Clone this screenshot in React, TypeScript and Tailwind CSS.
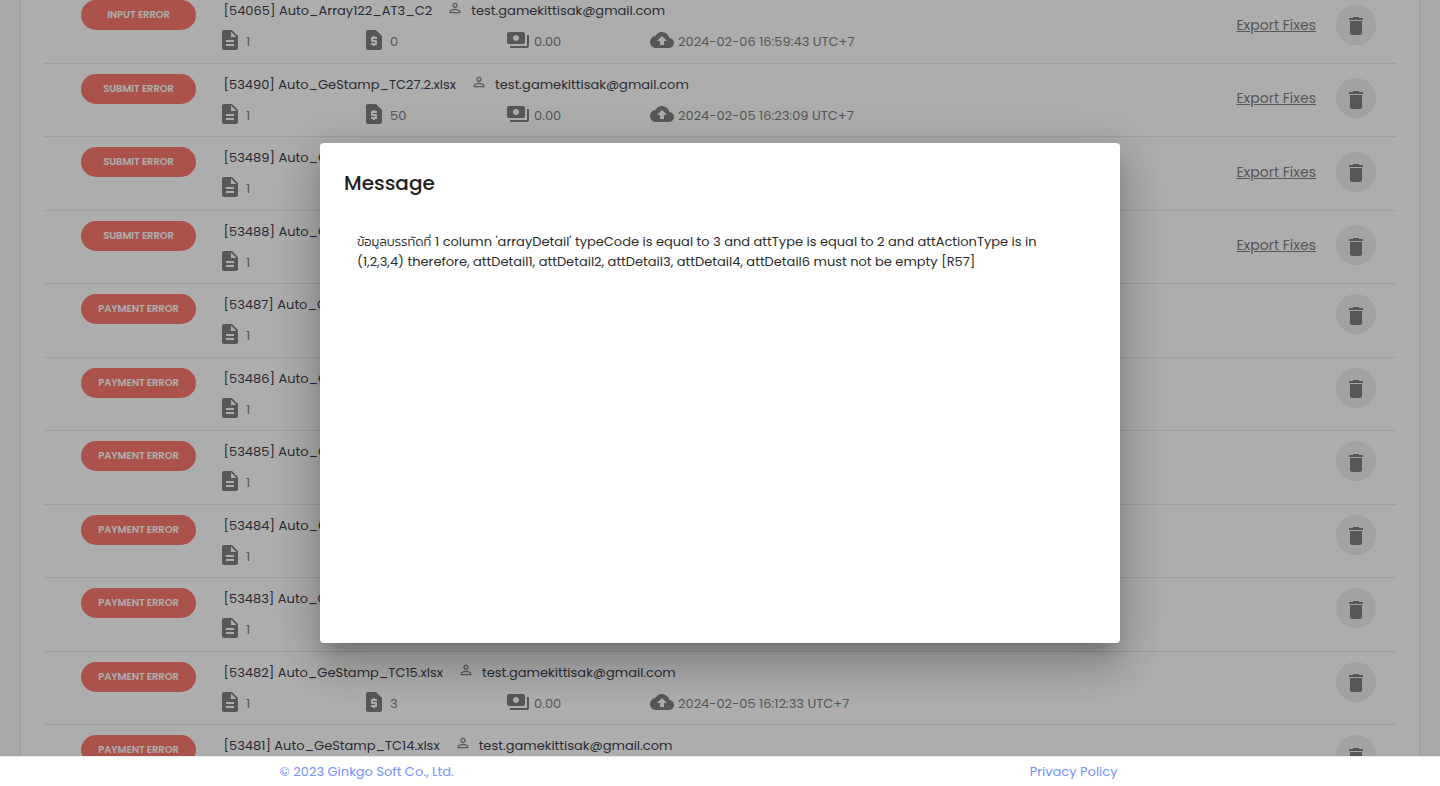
import React from "react";
import { MdBackup, MdDelete, MdDescription, MdPayments, MdPersonOutline, MdRequestPage } from "react-icons/md";

type Job = {
  id: string;
  name: string;
  status: string;
  docs: string;
  pages: string;
  amount: string;
  time: string;
  exportable?: boolean;
};

const jobs: Job[] = [
  { id: "54065", name: "Auto_Array122_AT3_C2", status: "INPUT ERROR", docs: "1", pages: "0", amount: "0.00", time: "2024-02-06 16:59:43 UTC+7", exportable: true },
  { id: "53490", name: "Auto_GeStamp_TC27.2.xlsx", status: "SUBMIT ERROR", docs: "1", pages: "50", amount: "0.00", time: "2024-02-05 16:23:09 UTC+7", exportable: true },
  { id: "53489", name: "Auto_GeStamp_TC27.1.xlsx", status: "SUBMIT ERROR", docs: "1", pages: "50", amount: "0.00", time: "2024-02-05 16:22:09 UTC+7", exportable: true },
  { id: "53488", name: "Auto_GeStamp_TC26.xlsx", status: "SUBMIT ERROR", docs: "1", pages: "50", amount: "0.00", time: "2024-02-05 16:21:09 UTC+7", exportable: true },
  { id: "53487", name: "Auto_GeStamp_TC20.xlsx", status: "PAYMENT ERROR", docs: "1", pages: "3", amount: "0.00", time: "2024-02-05 16:17:33 UTC+7" },
  { id: "53486", name: "Auto_GeStamp_TC19.xlsx", status: "PAYMENT ERROR", docs: "1", pages: "3", amount: "0.00", time: "2024-02-05 16:16:33 UTC+7" },
  { id: "53485", name: "Auto_GeStamp_TC18.xlsx", status: "PAYMENT ERROR", docs: "1", pages: "3", amount: "0.00", time: "2024-02-05 16:15:33 UTC+7" },
  { id: "53484", name: "Auto_GeStamp_TC17.xlsx", status: "PAYMENT ERROR", docs: "1", pages: "3", amount: "0.00", time: "2024-02-05 16:14:33 UTC+7" },
  { id: "53483", name: "Auto_GeStamp_TC16.xlsx", status: "PAYMENT ERROR", docs: "1", pages: "3", amount: "0.00", time: "2024-02-05 16:13:33 UTC+7" },
  { id: "53482", name: "Auto_GeStamp_TC15.xlsx", status: "PAYMENT ERROR", docs: "1", pages: "3", amount: "0.00", time: "2024-02-05 16:12:33 UTC+7" },
  { id: "53481", name: "Auto_GeStamp_TC14.xlsx", status: "PAYMENT ERROR", docs: "1", pages: "3", amount: "0.00", time: "2024-02-05 16:11:33 UTC+7" },
];

function JobRow({ job }: { job: Job }) {
  return (
    <div className="flex h-[73.5px] shrink-0 items-start border-b border-[#ebebed] pl-[37px] pr-5">
      <div className="mt-[10px] flex h-[30px] w-[115px] shrink-0 items-center justify-center rounded-full bg-[#fb7a6f] pb-px text-[10px] font-semibold tracking-[-0.1px] text-white">
        {job.status}
      </div>
      <div className="ml-[22px] flex w-[640px] shrink-0 flex-col">
        <div className="flex h-[38px] items-start whitespace-nowrap pl-[5.5px] pt-[11px] text-[13px] leading-5 text-[#3f3f4e]">
          <span>[{job.id}] {job.name}</span>
          <MdPersonOutline className="-mt-px ml-[15px] size-4 shrink-0 text-[#808080]" />
          <span className="ml-[8px]">{"test.gamekittisak@gmail.com"}</span>
        </div>
        <div className="flex h-6 items-center whitespace-nowrap text-[13px] text-[#808080]">
          <div className="flex w-36 items-center gap-1">
            <MdDescription className="size-6" />
            <span className="pt-[3px]">{job.docs}</span>
          </div>
          <div className="flex w-36 items-center gap-1">
            <MdRequestPage className="size-6" />
            <span className="pt-[3px]">{job.pages}</span>
          </div>
          <div className="flex w-36 items-center gap-1">
            <MdPayments className="size-6" />
            <span className="pt-[3px]">{job.amount}</span>
          </div>
          <div className="flex items-center gap-1">
            <MdBackup className="size-6" />
            <span className="pt-[3px]">{job.time}</span>
          </div>
        </div>
      </div>
      <div className={`ml-auto flex items-center gap-5 ${job.exportable ? "mt-[14.4px]" : "mt-[10px]"}`}>
        {job.exportable && <a className="text-sm text-[#808080] underline">Export Fixes</a>}
        <button className="flex size-10 items-center justify-center rounded-full bg-[#efefef] pt-[3px] text-[#808080]">
          <MdDelete className="size-6" />
        </button>
      </div>
    </div>
  );
}

export default function App() {
  return (
    <div className="relative flex h-[786px] w-[1440px] flex-col overflow-hidden bg-[#f8f8f8] font-['Poppins','Prompt','Noto_Sans',sans-serif]">
      <main className="flex min-h-0 flex-1 flex-col overflow-hidden px-[20px]">
        <div className="-mt-[9.6px] flex shrink-0 flex-col border-x border-[#ebebed] bg-white px-[23px]">
          {jobs.map((job) => (
            <JobRow key={job.id} job={job} />
          ))}
        </div>
      </main>
      <div className="absolute inset-0 flex items-center justify-center bg-black/[0.32]">
        <div
          role="dialog"
          className="flex h-[500px] w-[800px] flex-col rounded bg-white px-6 pt-6 shadow-[0_11px_15px_-7px_rgba(0,0,0,0.2),0_24px_38px_3px_rgba(0,0,0,0.14),0_9px_46px_8px_rgba(0,0,0,0.12)]"
        >
          <h2 className="text-[20px] font-medium leading-8 text-[#212121]">Message</h2>
          <div className="mt-[33px] px-[13px] text-[13px] leading-5 text-[#2b2b2b]">
            <p className="whitespace-nowrap"><span className="inline-block w-[78px] font-['Kanit','Prompt','Noto_Sans_Thai',sans-serif] text-[13px] font-light tracking-[-0.1px]">ข้อมูลบรรทัดที่</span>1 column 'arrayDetail' typeCode is equal to 3 and attType is equal to 2 and attActionType is in</p>
            <p className="whitespace-nowrap">(1,2,3,4) therefore, attDetail1, attDetail2, attDetail3, attDetail4, attDetail6 must not be empty [R57]</p>
          </div>
        </div>
      </div>
      <footer className="relative flex h-[30px] shrink-0 items-center justify-between border-t border-[#ebebeb] bg-white pl-[279.5px] pr-[322.5px] text-[13px] text-[#7392ff]">
        <span>© 2023 Ginkgo Soft Co., Ltd.</span>
        <a>Privacy Policy</a>
      </footer>
    </div>
  );
}
